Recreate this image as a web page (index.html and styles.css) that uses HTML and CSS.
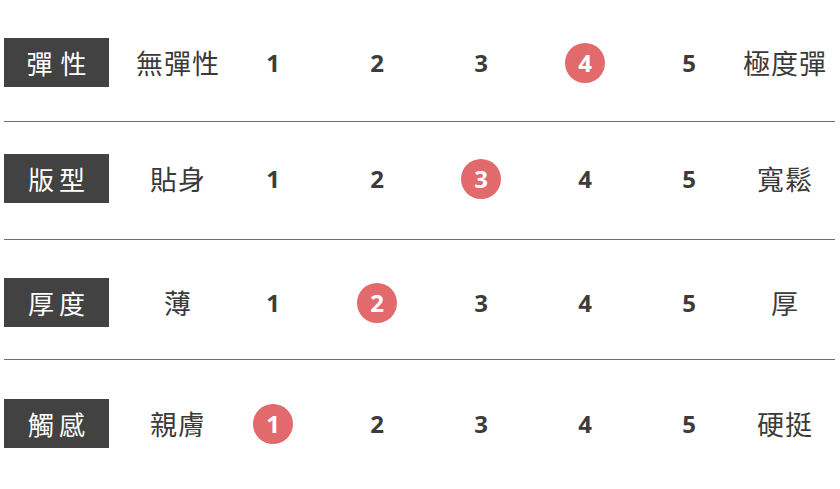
FILE: index.html
```html
<!DOCTYPE html>
<html lang="zh-Hant">
<head>
<meta charset="utf-8">
<title>尺寸感受</title>
<link rel="stylesheet" href="styles.css">
</head>
<body>
<div class="chart">
  <div class="row">
    <div class="label">彈 性</div>
    <div class="low">無彈性</div>
    <div class="num">1</div>
    <div class="num">2</div>
    <div class="num">3</div>
    <div class="num"><span class="dot">4</span></div>
    <div class="num">5</div>
    <div class="high">極度彈</div>
  </div>
  <div class="row">
    <div class="label">版型</div>
    <div class="low">貼身</div>
    <div class="num">1</div>
    <div class="num">2</div>
    <div class="num"><span class="dot">3</span></div>
    <div class="num">4</div>
    <div class="num">5</div>
    <div class="high">寬鬆</div>
  </div>
  <div class="row">
    <div class="label">厚度</div>
    <div class="low">薄</div>
    <div class="num">1</div>
    <div class="num"><span class="dot">2</span></div>
    <div class="num">3</div>
    <div class="num">4</div>
    <div class="num">5</div>
    <div class="high">厚</div>
  </div>
  <div class="row last">
    <div class="label">觸感</div>
    <div class="low">親膚</div>
    <div class="num"><span class="dot">1</span></div>
    <div class="num">2</div>
    <div class="num">3</div>
    <div class="num">4</div>
    <div class="num">5</div>
    <div class="high">硬挺</div>
  </div>
</div>
</body>
</html>
```
FILE: styles.css
```css
html, body {
  margin: 0;
  padding: 0;
  background: #ffffff;
}
body {
  font-family: "Noto Sans CJK TC", "Noto Sans", sans-serif;
  color: #3a3a3a;
}
.chart {
  padding: 3px 5px 0 4px;
}
.row {
  display: grid;
  grid-template-columns: 105px 112px repeat(5, 104px) 88px;
  align-items: center;
  padding: 35px 0 34px;
  border-bottom: 1px solid #6e6e6e;
}
.row:nth-child(2) { padding-top: 32px; padding-bottom: 36px; }
.row:nth-child(3) { padding-top: 38px; padding-bottom: 32px; }
.row.last { border-bottom: none; padding-top: 39px; }
.label {
  height: 49px;
  background: #424242;
  color: #ffffff;
  font-size: 26px;
  line-height: 49px;
  text-align: center;
  letter-spacing: 5px;
  text-indent: 5px;
  white-space: nowrap;
}
.row:first-child .label {
  letter-spacing: 1px;
  text-indent: 1px;
}
.low, .high {
  font-size: 27px;
  line-height: 1;
  text-align: center;
  letter-spacing: 1px;
  white-space: nowrap;
}
.low {
  padding-left: 26px;
}
.num {
  display: flex;
  justify-content: center;
  align-items: center;
  height: 49px;
  font-family: "Open Sans", "Liberation Sans", sans-serif;
  font-weight: 700;
  font-size: 24px;
  color: #3c3c3c;
}
.dot {
  width: 40px;
  height: 40px;
  border-radius: 50%;
  background: #e26a6d;
  color: #ffffff;
  font-weight: 700;
  display: flex;
  justify-content: center;
  align-items: center;
}
```
